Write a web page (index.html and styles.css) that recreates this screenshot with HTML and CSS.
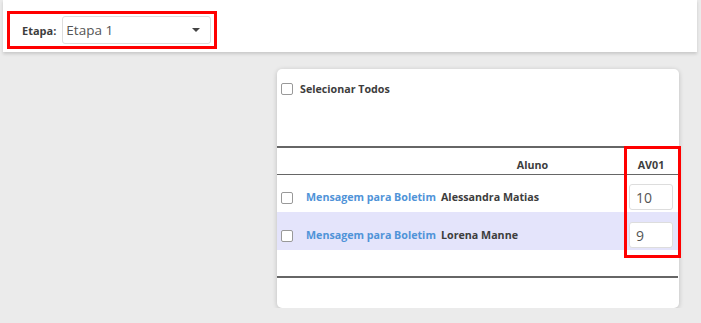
FILE: index.html
```html
<!DOCTYPE html>
<html lang="pt-BR">
<head>
  <meta charset="UTF-8">
  <meta name="viewport" content="width=device-width, initial-scale=1.0">
  <title>Notas por Etapa</title>
  <link rel="stylesheet" href="styles.css">
</head>
<body>
  <!-- Filtro -->
  <div class="filter-bar">
    <div class="filter-group">
      <label for="etapa">Etapa:</label>
      <div class="select-box" id="etapa">
        <span>Etapa 1</span>
        <span class="caret"></span>
      </div>
    </div>
  </div>

  <!-- Lançamento de notas -->
  <div class="content">
    <div class="card">
      <label class="select-all">
        <span class="check"></span>
        Selecionar Todos
      </label>

      <div class="table-wrap">
        <table class="grade-table">
          <thead>
            <tr>
              <th class="col-check"></th>
              <th class="col-link"></th>
              <th class="col-name">Aluno</th>
              <th class="col-grade">AV01</th>
            </tr>
          </thead>
          <tbody>
            <tr>
              <td class="col-check"><span class="check"></span></td>
              <td class="col-link"><a href="#">Mensagem para Boletim</a></td>
              <td class="col-name">Alessandra Matias</td>
              <td class="col-grade"><input class="grade-input" type="text" value="10"></td>
            </tr>
            <tr class="selected">
              <td class="col-check"><span class="check"></span></td>
              <td class="col-link"><a href="#">Mensagem para Boletim</a></td>
              <td class="col-name">Lorena Manne</td>
              <td class="col-grade"><input class="grade-input" type="text" value="9"></td>
            </tr>
          </tbody>
          <tfoot>
            <tr>
              <td colspan="4"></td>
            </tr>
          </tfoot>
        </table>
        <div class="column-highlight"></div>
      </div>
    </div>
  </div>
</body>
</html>
```

FILE: styles.css
```css
/* General Styling */
body {
  font-family: 'Open Sans', 'Noto Sans', sans-serif;
  margin: 0;
  padding: 0;
  background: #ebebeb;
  color: #3d3d3d;
}

/* Filter Bar */
.filter-bar {
  background: #fff;
  height: 52px;
  margin: 0 4px 0 3px;
  padding: 11px 0 0 4px;
  box-sizing: border-box;
  box-shadow: 0 2px 3px rgba(0, 0, 0, 0.15);
}

.filter-group {
  display: inline-flex;
  align-items: center;
  gap: 6px;
  height: 38px;
  width: 210px;
  padding: 0 3px 0 12px;
  box-sizing: border-box;
  border: 3px solid #ff0000;
}

.filter-group label {
  font-size: 11px;
  font-weight: 700;
  color: #3d3d3d;
}

.select-box {
  flex: 1;
  height: 26px;
  display: flex;
  align-items: center;
  justify-content: space-between;
  padding: 0 10px 0 3px;
  border: 1px solid #ddd;
  border-radius: 3px;
  font-size: 13.5px;
  color: #555;
}

.caret {
  width: 0;
  height: 0;
  border-left: 4px solid transparent;
  border-right: 4px solid transparent;
  border-top: 4px solid #444;
}

/* Card */
.content {
  padding: 17px 0 0 277px;
}

.card {
  width: 402px;
  height: 239px;
  background: #fff;
  border-radius: 5px;
  box-shadow: 0 1px 5px rgba(0, 0, 0, 0.2);
  padding-top: 13px;
  box-sizing: border-box;
}

.select-all {
  display: flex;
  align-items: center;
  gap: 7px;
  padding-left: 4px;
  font-size: 10.7px;
  font-weight: 700;
  color: #3d3d3d;
  height: 14px;
}

.check {
  display: inline-block;
  width: 10px;
  height: 10px;
  border: 1px solid #999;
  border-radius: 2px;
  background: #fff;
}

/* Table */
.table-wrap {
  position: relative;
  margin-top: 50px;
}

.grade-table {
  width: 401px;
  border-collapse: collapse;
  font-size: 10.7px;
  font-weight: 700;
}

.grade-table thead th {
  height: 27px;
  padding: 9px 0 0;
  border-top: 2px solid #666;
  border-bottom: 1px solid #666;
  vertical-align: middle;
  color: #3d3d3d;
  box-sizing: border-box;
}

.grade-table tbody td {
  height: 38px;
  padding: 8px 0 0;
  box-sizing: border-box;
  vertical-align: middle;
  white-space: nowrap;
}

.grade-table tbody tr.selected td {
  background: #e4e4fb;
}

.grade-table tfoot td {
  height: 26px;
  padding: 0;
  border-bottom: 2px solid #666;
}

.col-check {
  width: 29px;
  padding-left: 4px !important;
  box-sizing: border-box;
}

.col-check .check {
  vertical-align: middle;
}

.col-link {
  width: 135px;
}

.col-link a {
  color: #4f93d8;
  text-decoration: none;
}

.col-name {
  text-align: left;
  color: #3d3d3d;
}

th.col-name {
  text-align: center;
}

.col-grade {
  width: 54px;
  text-align: center;
}

.grade-input {
  width: 44px;
  height: 26px;
  box-sizing: border-box;
  border: 1px solid #ddd;
  border-radius: 3px;
  padding: 0 6px;
  font-family: inherit;
  font-size: 14px;
  font-weight: 400;
  color: #555;
  display: block;
  margin: 0 auto;
}

/* Red highlight over the AV01 column */
.column-highlight {
  position: absolute;
  top: 0;
  right: -2px;
  width: 57px;
  height: 112px;
  box-sizing: border-box;
  border: 3px solid #ff0000;
  pointer-events: none;
}
```
